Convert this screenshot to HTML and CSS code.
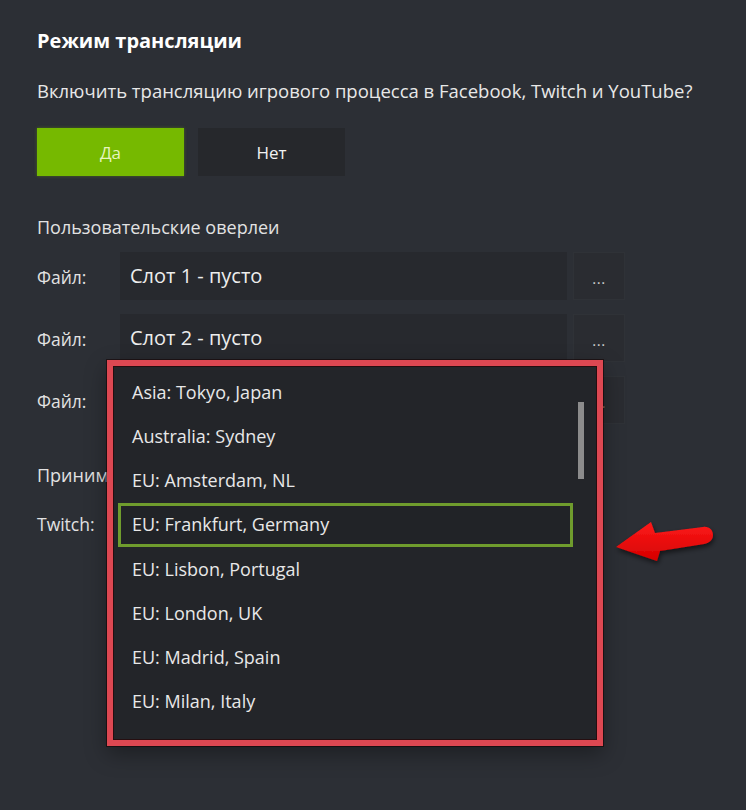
FILE: index.html
```html
<!DOCTYPE html>
<html lang="ru">
<head>
<meta charset="utf-8">
<link rel="stylesheet" href="styles.css">
</head>
<body>
<div class="page">
  <h1 class="title">Режим трансляции</h1>
  <p class="question">Включить трансляцию игрового процесса в Facebook, Twitch и YouTube?</p>
  <div class="toggle">
    <button class="btn btn-on">Да</button>
    <button class="btn btn-off">Нет</button>
  </div>
  <div class="section">Пользовательские оверлеи</div>
  <div class="rows">
    <div class="row"><span class="lbl">Файл:</span><div class="field">Слот 1 - пусто</div><div class="more">...</div></div>
    <div class="row"><span class="lbl">Файл:</span><div class="field">Слот 2 - пусто</div><div class="more">...</div></div>
    <div class="row"><span class="lbl">Файл:</span><div class="field"></div><div class="more">...</div></div>
  </div>
  <div class="section section-server">Принимающий сервер</div>
  <div class="row row-twitch"><span class="lbl">Twitch:</span><div class="field field-select"></div></div>

  <div class="dropdown">
    <ul class="items">
      <li class="item">Asia: Tokyo, Japan</li>
      <li class="item">Australia: Sydney</li>
      <li class="item">EU: Amsterdam, NL</li>
      <li class="item item-sel">EU: Frankfurt, Germany</li>
      <li class="item">EU: Lisbon, Portugal</li>
      <li class="item">EU: London, UK</li>
      <li class="item">EU: Madrid, Spain</li>
      <li class="item">EU: Milan, Italy</li>
    </ul>
    <div class="scroll-thumb"></div>
  </div>

  <svg class="arrow" width="115" height="60" viewBox="0 0 115 60">
    <defs>
      <linearGradient id="ag" x1="0" y1="0" x2="0" y2="1">
        <stop offset="0" stop-color="#ff1a1a"/>
        <stop offset="1" stop-color="#d40000"/>
      </linearGradient>
      <filter id="sh" x="-20%" y="-30%" width="140%" height="170%">
        <feDropShadow dx="1" dy="3" stdDeviation="2.5" flood-color="#000" flood-opacity="0.55"/>
      </filter>
    </defs>
    <path d="M11 37 L46 12 L50 23 L98 17 C104 16 108 20 108 25 C108 30 104 33 99 34 L55 41 L52 51 Z" fill="url(#ag)" filter="url(#sh)"/>
  </svg>
</div>
</body>
</html>
```
FILE: styles.css
```css
* { box-sizing: border-box; }
html, body { margin: 0; padding: 0; }
body {
  background: #2c2f35;
  font-family: "Open Sans", "Noto Sans", sans-serif;
  color: #e6e6e6;
  width: 746px;
  height: 810px;
  overflow: hidden;
}
.page {
  position: relative;
  padding: 26px 0 0 37px;
  height: 810px;
}
.title {
  margin: 0;
  font-size: 20px;
  font-weight: 700;
  line-height: 30px;
  color: #fff;
}
.question {
  margin: 23px 0 0;
  font-size: 18.5px;
  line-height: 24px;
  color: #e8e8e8;
}
.toggle {
  display: flex;
  gap: 14px;
  margin-top: 25px;
}
.btn {
  width: 147px;
  height: 48px;
  border: 0;
  font-family: inherit;
  font-size: 17px;
  padding: 0;
}
.btn-on {
  background: #76b900;
  color: #e6f4bd;
  box-shadow: 0 0 3px rgba(118,185,0,.4);
}
.btn-off {
  background: #26282c;
  color: #f2f2f2;
}
.section {
  margin-top: 39px;
  font-size: 18px;
  line-height: 24px;
  color: #e2e2e2;
}
.rows {
  display: flex;
  flex-direction: column;
  gap: 14px;
  margin-top: 13px;
}
.row {
  display: flex;
  align-items: flex-start;
  height: 48px;
}
.lbl {
  width: 83px;
  padding-top: 1px;
  font-size: 17.5px;
  line-height: 48px;
  color: #e2e2e2;
}
.field {
  width: 447px;
  height: 48px;
  background: #27292e;
  padding-left: 10px;
  font-size: 20px;
  line-height: 48px;
  color: #ededed;
}
.more {
  width: 52px;
  height: 48px;
  margin-left: 6px;
  background: #2a2c31;
  border: 1px solid #2f3237;
  color: #cfcfcf;
  font-size: 15px;
  letter-spacing: 0.5px;
  text-align: center;
  line-height: 50px;
}
.section-server {
  margin-top: 39px;
}
.row-twitch {
  margin-top: 12px;
}
.dropdown {
  position: absolute;
  left: 107px;
  top: 360px;
  width: 496px;
  height: 386px;
  background: #232529;
  border: 6px solid #dd4852;
  box-shadow: 0 0 0 1px rgba(20,0,0,.55), inset 0 0 0 1px rgba(40,0,0,.6), 0 8px 20px rgba(0,0,0,.35);
}
.items {
  list-style: none;
  margin: 0;
  padding: 4px 0 0 0;
}
.item {
  height: 44.2px;
  line-height: 44.2px;
  padding-left: 19px;
  font-size: 18px;
  color: #e8e8e8;
  margin-right: 24px;
}
.item-sel {
  margin-left: 5px;
  padding-left: 11px;
  line-height: 36.2px;
  border: 3px solid #6f9c2d;
  background: #212327;
}
.scroll-thumb {
  position: absolute;
  left: 465px;
  top: 36px;
  width: 6px;
  height: 77px;
  background: #8c8c8c;
}
.arrow {
  position: absolute;
  left: 605px;
  top: 510px;
}
```
